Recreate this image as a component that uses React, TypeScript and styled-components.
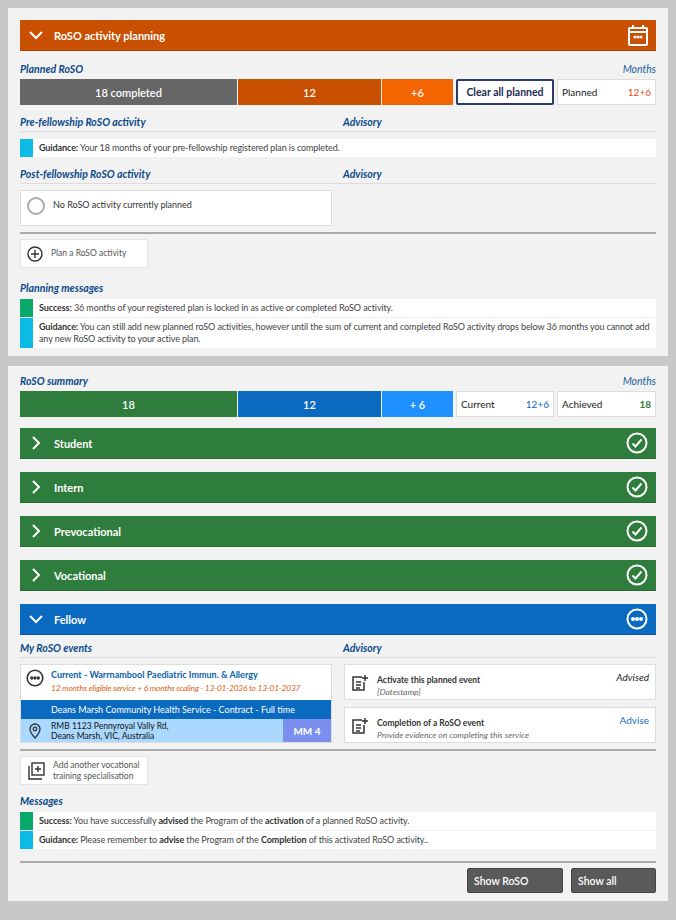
import styled, { createGlobalStyle } from "styled-components";

const Global = createGlobalStyle`
  body { margin: 0; background: #c8c8c8; font-family: Lato, "Open Sans", sans-serif; color: #222; }
`;

const Page = styled.div`
  padding: 8px 8px 0;
  display: flex;
  flex-direction: column;
  gap: 10px;
`;
const Panel = styled.div<{ pt: number }>`
  background: #f2f2f2;
  padding: ${(p) => p.pt}px 12px 8px;
  display: flex;
  flex-direction: column;
`;
const Header = styled.div<{ bg: string }>`
  background: ${(p) => p.bg};
  height: 30px;
  flex-shrink: 0;
  display: flex;
  align-items: center;
  padding: 0 8px;
  color: #fff;
  font-weight: 700;
  font-size: 11px;
  gap: 10px;
  border-bottom: 1px solid rgba(0,0,0,0.15);
`;
const HeaderTitle = styled.span`
  flex: 1;
`;
const TitleRow = styled.div<{ mt: number }>`
  display: flex;
  justify-content: space-between;
  margin-top: ${(p) => p.mt}px;
  height: 14px;
  align-items: center;
`;
const SectionTitle = styled.span`
  color: #0b4a8a;
  font-style: italic;
  font-weight: 700;
  font-size: 10.5px;
`;
const Months = styled.span`
  color: #1a5ea0;
  font-style: italic;
  font-size: 10.5px;
`;
const Bar = styled.div`
  display: flex;
  height: 26px;
  margin-top: 3px;
  gap: 3px;
`;
const Seg = styled.div<{ bg: string; w: number }>`
  background: ${(p) => p.bg};
  width: ${(p) => p.w}px;
  display: flex;
  align-items: center;
  justify-content: center;
  color: #fff;
  font-size: 11px;
  font-weight: 600;
`;
const Segs = styled.div`
  display: flex;
  gap: 1px;
`;
const ClearBtn = styled.button`
  width: 98px;
  border: 2px solid #2b3a66;
  background: #fff;
  color: #1d2b50;
  font-family: inherit;
  font-weight: 700;
  font-size: 10.5px;
  border-radius: 2px;
  padding: 0;
`;
const StatBox = styled.div<{ w?: number }>`
  flex: ${(p) => (p.w ? `0 0 ${p.w}px` : "1")};
  box-sizing: border-box;
  background: #fff;
  border: 1px solid #ddd;
  display: flex;
  justify-content: space-between;
  align-items: center;
  padding: 0 4px;
  font-size: 10px;
`;
const StatVal = styled.span<{ c: string; b?: boolean }>`
  color: ${(p) => p.c};
  font-weight: ${(p) => (p.b ? 700 : 400)};
`;
const TwoCol = styled.div<{ mt: number }>`
  display: grid;
  grid-template-columns: 323px 1fr;
  margin-top: ${(p) => p.mt}px;
  border-bottom: 1px solid #dcdcdc;
  padding-bottom: 3px;
`;
const Msgs = styled.div<{ mt: number }>`
  display: flex;
  flex-direction: column;
  gap: 1px;
  margin-top: ${(p) => p.mt}px;
`;
const Msg = styled.div<{ c: string }>`
  background: #fff;
  border-left: 13px solid ${(p) => p.c};
  padding: 3px 6px;
  font-size: 9px;
  line-height: 12px;
  color: #444;
  letter-spacing: -0.1px;
  b { color: #333; }
`;
const Grid2 = styled.div<{ mt: number }>`
  display: grid;
  grid-template-columns: 312px 1fr;
  column-gap: 12px;
  margin-top: ${(p) => p.mt}px;
  align-items: start;
`;
const Card = styled.div<{ h: number }>`
  background: #fff;
  border: 1px solid #ddd;
  height: ${(p) => p.h}px;
  box-sizing: border-box;
  display: flex;
  gap: 8px;
  padding: 6px 6px;
  font-size: 9px;
  color: #333;
`;
const Circle = styled.span`
  width: 14px;
  height: 14px;
  border: 2px solid #aaa;
  border-radius: 50%;
  flex-shrink: 0;
`;
const Divider = styled.div<{ mt: number }>`
  height: 2px;
  background: #aaa;
  margin-top: ${(p) => p.mt}px;
`;
const AddBtn = styled.div`
  margin-top: 5px;
  width: 128px;
  height: 29px;
  background: #fff;
  border: 1px solid #e2e2e2;
  display: flex;
  align-items: center;
  gap: 8px;
  padding: 0 6px;
  font-size: 8.5px;
  color: #555;
  line-height: 11px;
  box-sizing: border-box;
`;
const Accs = styled.div`
  display: flex;
  flex-direction: column;
  gap: 13px;
  margin-top: 11px;
`;
const EventCard = styled.div`
  background: #fff;
  border: 1px solid #ddd;
  display: flex;
  flex-direction: column;
`;
const EventTop = styled.div`
  display: flex;
  gap: 7px;
  padding: 4px 5px;
  height: 27px;
`;
const EventTitle = styled.div`
  color: #0b5ea8;
  font-weight: 700;
  font-size: 9px;
  white-space: nowrap;
`;
const EventSub = styled.div`
  color: #d9641c;
  font-style: italic;
  font-size: 8.4px;
  margin-top: 3px;
  white-space: nowrap;
  letter-spacing: -0.2px;
`;
const BlueBand = styled.div`
  background: #0a6abf;
  color: #fff;
  font-size: 9px;
  height: 19px;
  display: flex;
  align-items: center;
  padding-left: 30px;
`;
const AddrRow = styled.div`
  background: #aad8ff;
  display: flex;
  height: 23px;
  font-size: 8.5px;
  line-height: 10px;
  color: #111;
`;
const Addr = styled.div`
  flex: 1;
  display: flex;
  align-items: center;
  gap: 10px;
  padding-left: 8px;
`;
const MM = styled.div`
  width: 48px;
  background: #7b90ee;
  color: #fff;
  font-weight: 700;
  font-size: 10px;
  display: flex;
  align-items: center;
  justify-content: center;
`;
const AdvCol = styled.div`
  display: flex;
  flex-direction: column;
  gap: 7px;
`;
const AdvTitle = styled.div`
  font-weight: 700;
  font-size: 8.5px;
  margin-top: 4px;
`;
const AdvSub = styled.div`
  font-style: italic;
  color: #666;
  font-size: 8.5px;
  margin-top: 2px;
`;
const AdvTag = styled.span<{ c: string; i?: boolean }>`
  margin-left: auto;
  color: ${(p) => p.c};
  font-style: ${(p) => (p.i ? "italic" : "normal")};
  font-size: 10px;
`;
const Footer = styled.div`
  display: flex;
  justify-content: flex-end;
  gap: 8px;
  margin-top: 5px;
`;
const DarkBtn = styled.button<{ w: number }>`
  width: ${(p) => p.w}px;
  height: 25px;
  background: #5a5a5a;
  border: 1px solid #444;
  color: #fff;
  font-family: inherit;
  font-size: 10.5px;
  font-weight: 600;
  text-align: left;
  padding-left: 6px;
  border-radius: 2px;
`;

const Chevron = ({ down }: { down?: boolean }) => (
  <svg width="16" height="16" viewBox="0 0 16 16" fill="none" stroke="#fff" strokeWidth="2">
    {down ? <path d="M2 5l6 6 6-6" /> : <path d="M5 2l6 6-6 6" />}
  </svg>
);
const CheckCircle = () => (
  <svg width="22" height="22" viewBox="0 0 22 22" fill="none" stroke="#fff" strokeWidth="2">
    <circle cx="11" cy="11" r="9.5" />
    <path d="M6.5 11.5l3 3 6-7" />
  </svg>
);
const DotsCircle = ({ c = "#fff", s = 22 }: { c?: string; s?: number }) => (
  <svg width={s} height={s} viewBox="0 0 22 22" fill="none" stroke={c} strokeWidth="2" style={{ flexShrink: 0 }}>
    <circle cx="11" cy="11" r="9.5" />
    <circle cx="7" cy="11" r="1" fill={c} />
    <circle cx="11" cy="11" r="1" fill={c} />
    <circle cx="15" cy="11" r="1" fill={c} />
  </svg>
);
const NoteIcon = () => (
  <svg width="18" height="18" viewBox="0 0 18 18" fill="none" stroke="#333" strokeWidth="1.5" style={{ flexShrink: 0, marginTop: 3 }}>
    <path d="M11 3H2v13h11V8" />
    <path d="M5 8h5M5 11h5M5 14h4M14 1v6M11 4h6" />
  </svg>
);
const Acc = ({ label }: { label: string }) => (
  <Header bg="#2f7d3c">
    <Chevron />
    <HeaderTitle>{label}</HeaderTitle>
    <CheckCircle />
  </Header>
);

export default function App() {
  return (
    <Page>
      <Global />
      <Panel pt={12}>
        <Header bg="#c85000">
          <Chevron down />
          <HeaderTitle>RoSO activity planning</HeaderTitle>
          <svg width="20" height="22" viewBox="0 0 20 22" fill="none" stroke="#fff" strokeWidth="2">
            <rect x="1" y="4" width="18" height="17" rx="1" />
            <path d="M1 8h18M5 1v4M15 1v4" />
            <circle cx="7" cy="13" r="0.6" fill="#fff" />
            <circle cx="10" cy="13" r="0.6" fill="#fff" />
            <circle cx="13" cy="13" r="0.6" fill="#fff" />
          </svg>
        </Header>
        <TitleRow mt={11}>
          <SectionTitle>Planned RoSO</SectionTitle>
          <Months>Months</Months>
        </TitleRow>
        <Bar>
          <Segs>
            <Seg bg="#666" w={217}>18 completed</Seg>
            <Seg bg="#c85000" w={143}>12</Seg>
            <Seg bg="#f26500" w={71}>+6</Seg>
          </Segs>
          <ClearBtn>Clear all planned</ClearBtn>
          <StatBox>
            <span>Planned</span>
            <StatVal c="#f04a1a">12+6</StatVal>
          </StatBox>
        </Bar>
        <TwoCol mt={11}>
          <SectionTitle>Pre-fellowship RoSO activity</SectionTitle>
          <SectionTitle>Advisory</SectionTitle>
        </TwoCol>
        <Msgs mt={7}>
          <Msg c="#0bbbe6"><b>Guidance:</b> Your 18 months of your pre-fellowship registered plan is completed.</Msg>
        </Msgs>
        <TwoCol mt={11}>
          <SectionTitle>Post-fellowship RoSO activity</SectionTitle>
          <SectionTitle>Advisory</SectionTitle>
        </TwoCol>
        <Grid2 mt={6}>
          <Card h={36}>
            <Circle />
            <span style={{ marginTop: 2 }}>No RoSO activity currently planned</span>
          </Card>
        </Grid2>
        <Divider mt={6} />
        <AddBtn>
          <svg width="16" height="16" viewBox="0 0 16 16" fill="none" stroke="#333" strokeWidth="1.4">
            <circle cx="8" cy="8" r="7" />
            <path d="M8 4v8M4 8h8" />
          </svg>
          Plan a RoSO activity
        </AddBtn>
        <TitleRow mt={13}>
          <SectionTitle>Planning messages</SectionTitle>
        </TitleRow>
        <Msgs mt={4}>
          <Msg c="#0aa86b"><b>Success:</b> 36 months of your registered plan is locked in as active or completed RoSO activity.</Msg>
          <Msg c="#0bbbe6"><b>Guidance:</b> You can still add new planned roSO activities, however until the sum of current and completed RoSO activity drops below 36 months you cannot add any new RoSO activity to your active plan.</Msg>
        </Msgs>
      </Panel>

      <Panel pt={8}>
        <TitleRow mt={0}>
          <SectionTitle>RoSO summary</SectionTitle>
          <Months>Months</Months>
        </TitleRow>
        <Bar>
          <Segs>
            <Seg bg="#2f7d3c" w={217}>18</Seg>
            <Seg bg="#0a6abf" w={143}>12</Seg>
            <Seg bg="#1e90ff" w={71}>+ 6</Seg>
          </Segs>
          <StatBox w={98}>
            <span>Current</span>
            <StatVal c="#0a6abf">12+6</StatVal>
          </StatBox>
          <StatBox>
            <span>Achieved</span>
            <StatVal c="#2f7d3c" b>18</StatVal>
          </StatBox>
        </Bar>
        <Accs>
          <Acc label="Student" />
          <Acc label="Intern" />
          <Acc label="Prevocational" />
          <Acc label="Vocational" />
          <Header bg="#0a6abf">
            <Chevron down />
            <HeaderTitle>Fellow</HeaderTitle>
            <DotsCircle />
          </Header>
        </Accs>
        <TwoCol mt={7}>
          <SectionTitle>My RoSO events</SectionTitle>
          <SectionTitle>Advisory</SectionTitle>
        </TwoCol>
        <Grid2 mt={6}>
          <EventCard>
            <EventTop>
              <DotsCircle c="#333" s={18} />
              <div>
                <EventTitle>Current - Warrnambool Paediatric Immun. &amp; Allergy</EventTitle>
                <EventSub>12 months eligible service + 6 months scaling - 13-01-2036 to 13-01-2037</EventSub>
              </div>
            </EventTop>
            <BlueBand>Deans Marsh Community Health Service - Contract - Full time</BlueBand>
            <AddrRow>
              <Addr>
                <svg width="12" height="16" viewBox="0 0 12 16" fill="none" stroke="#333" strokeWidth="1.3">
                  <path d="M6 15s5-5.5 5-9A5 5 0 0 0 1 6c0 3.5 5 9 5 9z" />
                  <circle cx="6" cy="6" r="1.8" />
                </svg>
                <div>RMB 1123 Pennyroyal Vally Rd,<br />Deans Marsh, VIC, Australia</div>
              </Addr>
              <MM>MM 4</MM>
            </AddrRow>
          </EventCard>
          <AdvCol>
            <Card h={36}>
              <NoteIcon />
              <div>
                <AdvTitle>Activate this planned event</AdvTitle>
                <AdvSub>[Datestamp]</AdvSub>
              </div>
              <AdvTag c="#222" i>Advised</AdvTag>
            </Card>
            <Card h={36}>
              <NoteIcon />
              <div>
                <AdvTitle>Completion of a RoSO event</AdvTitle>
                <AdvSub>Provide evidence on completing this service</AdvSub>
              </div>
              <AdvTag c="#1a6ec0">Advise</AdvTag>
            </Card>
          </AdvCol>
        </Grid2>
        <Divider mt={6} />
        <AddBtn>
          <svg width="18" height="18" viewBox="0 0 18 18" fill="none" stroke="#333" strokeWidth="1.4" style={{ flexShrink: 0 }}>
            <rect x="5" y="1" width="12" height="12" />
            <path d="M2 4v13h13M11 4v6M8 7h6" />
          </svg>
          <span>Add another vocational training specialisation</span>
        </AddBtn>
        <TitleRow mt={9}>
          <SectionTitle>Messages</SectionTitle>
        </TitleRow>
        <Msgs mt={4}>
          <Msg c="#0aa86b"><b>Success:</b> You have successfully <b>advised</b> the Program of the <b>activation</b> of a planned RoSO activity.</Msg>
          <Msg c="#0bbbe6"><b>Guidance:</b> Please remember to <b>advise</b> the Program of the <b>Completion</b> of this activated RoSO activity..</Msg>
        </Msgs>
        <Divider mt={12} />
        <Footer>
          <DarkBtn w={96}>Show RoSO</DarkBtn>
          <DarkBtn w={85}>Show all</DarkBtn>
        </Footer>
      </Panel>
    </Page>
  );
}
